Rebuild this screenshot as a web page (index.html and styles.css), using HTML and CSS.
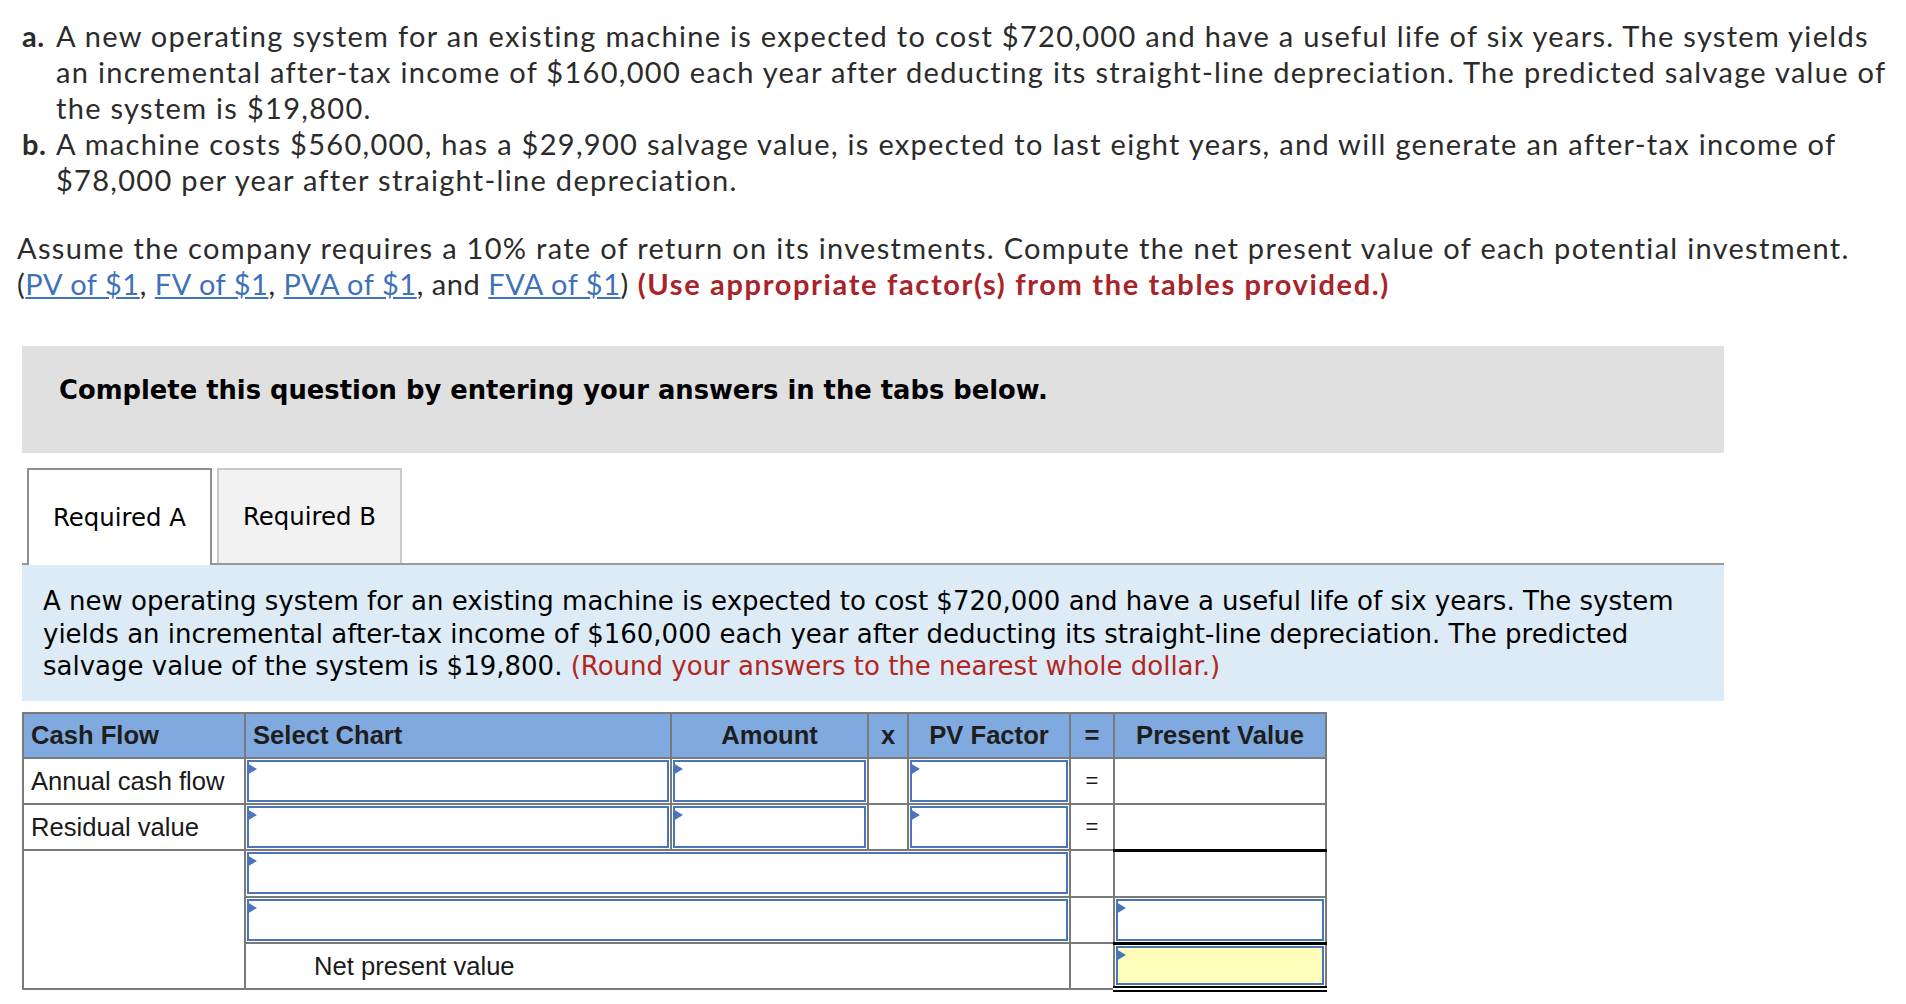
FILE: index.html
```html
<!DOCTYPE html>
<html>
<head>
<meta charset="utf-8">
<link rel="stylesheet" href="styles.css">
</head>
<body>
<div class="page">
  <ul class="parts">
    <li><b class="lbl">a.</b><span>A new operating system for an existing machine is expected to cost $720,000 and have a useful life of six years. The system yields an incremental after-tax income of $160,000 each year after deducting its straight-line depreciation. The predicted salvage value of the system is $19,800.</span></li>
    <li><b class="lbl">b.</b><span>A machine costs $560,000, has a $29,900 salvage value, is expected to last eight years, and will generate an after-tax income of $78,000 per year after straight-line depreciation.</span></li>
  </ul>
  <p class="assume">Assume the company requires a 10% rate of return on its investments. Compute the net present value of each potential investment. <span class="refs">(<a href="#">PV of $1</a>, <a href="#">FV of $1</a>, <a href="#">PVA of $1</a>, and <a href="#">FVA of $1</a>)</span> <b class="warn">(Use appropriate factor(s) from the tables provided.)</b></p>

  <div class="notice">Complete this question by entering your answers in the tabs below.</div>

  <div class="tabs">
    <div class="tab active">Required A</div>
    <div class="tab">Required B</div>
  </div>
  <div class="panel">A new operating system for an existing machine is expected to cost $720,000 and have a useful life of six years. The system yields an incremental after-tax income of $160,000 each year after deducting its straight-line depreciation. The predicted salvage value of the system is $19,800. <span class="round">(Round your answers to the nearest whole dollar.)</span></div>

  <table class="cf">
    <colgroup>
      <col class="c1"><col class="c2"><col class="c3"><col class="c4"><col class="c5"><col class="c6"><col class="c7">
    </colgroup>
    <thead>
      <tr>
        <th class="left">Cash Flow</th>
        <th class="left">Select Chart</th>
        <th>Amount</th>
        <th>x</th>
        <th>PV Factor</th>
        <th>=</th>
        <th>Present Value</th>
      </tr>
    </thead>
    <tbody>
      <tr>
        <td class="label">Annual cash flow</td>
        <td class="in"><div class="box"></div></td>
        <td class="in"><div class="box"></div></td>
        <td></td>
        <td class="in"><div class="box"></div></td>
        <td class="eq">=</td>
        <td></td>
      </tr>
      <tr>
        <td class="label">Residual value</td>
        <td class="in"><div class="box"></div></td>
        <td class="in"><div class="box"></div></td>
        <td></td>
        <td class="in"><div class="box"></div></td>
        <td class="eq">=</td>
        <td class="under"></td>
      </tr>
      <tr>
        <td rowspan="3"></td>
        <td class="in" colspan="4"><div class="box"></div></td>
        <td></td>
        <td></td>
      </tr>
      <tr>
        <td class="in" colspan="4"><div class="box"></div></td>
        <td></td>
        <td class="in under"><div class="box"></div></td>
      </tr>
      <tr>
        <td class="npv" colspan="4">Net present value</td>
        <td></td>
        <td class="in total"><div class="box yellow"></div></td>
      </tr>
    </tbody>
  </table>
</div>
</body>
</html>
```

FILE: styles.css
```css
html, body {
  margin: 0;
  padding: 0;
  background: #fff;
}

.page {
  padding: 18px 0 0 17px;
  font-family: Lato, "Open Sans", sans-serif;
  font-size: 29px;
  line-height: 36px;
  letter-spacing: 1.3px;
  color: #2b2b2b;
}

.parts {
  list-style: none;
  margin: 0;
  padding: 0 0 0 5px;
  width: 1880px;
  box-sizing: border-box;
}

.parts li {
  display: flex;
}

.parts .lbl {
  flex: 0 0 34px;
  font-weight: 700;
  letter-spacing: 0.5px;
}

.assume {
  margin: 32px 0 0 0;
  width: 1863px;
}

.refs {
  letter-spacing: 0.55px;
}

.assume a {
  color: #3f72b8;
  text-decoration: underline;
}

.warn {
  color: #a8232a;
  font-weight: 700;
  letter-spacing: 1.65px;
}

.notice {
  margin: 44px 0 0 5px;
  width: 1702px;
  height: 107px;
  box-sizing: border-box;
  background: #e0e0e0;
  display: flex;
  align-items: center;
  padding: 0 0 19px 37px;
  font-family: "DejaVu Sans", Verdana, sans-serif;
  font-weight: 700;
  font-size: 25.8px;
  letter-spacing: 0;
  color: #000;
}

.tabs {
  margin: 15px 0 0 5px;
  width: 1702px;
  display: flex;
  gap: 5px;
  padding-left: 5px;
  box-sizing: border-box;
  border-bottom: 2px solid #999;
  height: 97px;
  font-family: "DejaVu Sans", Verdana, sans-serif;
  font-size: 24.4px;
  letter-spacing: 0;
  color: #000;
}

.tab {
  width: 185px;
  box-sizing: border-box;
  border: 2px solid #c8c8c8;
  border-bottom: none;
  background: #f2f2f2;
  display: flex;
  align-items: center;
  justify-content: center;
  padding-top: 1px;
}

.tab.active {
  background: #fff;
  border-color: #8f8f8f;
  margin-bottom: -2px;
  position: relative;
}

.panel {
  margin: 0 0 0 5px;
  width: 1702px;
  box-sizing: border-box;
  background: #ddebf7;
  padding: 20px 24px 18px 21px;
  font-family: "DejaVu Sans", Verdana, sans-serif;
  font-size: 26px;
  line-height: 32.5px;
  letter-spacing: 0;
  color: #000;
}

.round {
  color: #b3261e;
}

.cf {
  margin: 11px 0 0 5px;
  border-collapse: collapse;
  table-layout: fixed;
  width: 1303px;
  font-family: "Liberation Sans", Arial, sans-serif;
  font-size: 25.6px;
  letter-spacing: 0;
  color: #1a1a1a;
}

.c1 { width: 222px; }
.c2 { width: 426px; }
.c3 { width: 197px; }
.c4 { width: 40px; }
.c5 { width: 162px; }
.c6 { width: 44px; }
.c7 { width: 212px; }

.cf th, .cf td {
  border: 2px solid #7a7a7a;
  height: 44px;
  padding: 0;
  vertical-align: middle;
}

.cf th {
  height: 43px;
  background: #80aadf;
  font-weight: 700;
  text-align: center;
  color: #1e1e1e;
}

.cf th.left {
  text-align: left;
  padding-left: 7px;
}

.cf td.label {
  padding-left: 7px;
}

.cf td.eq {
  text-align: center;
  font-size: 22px;
}

.cf td.in {
  padding: 1px;
  height: 42px;
}

.cf td.npv {
  padding-left: 68px;
}

.cf td.under {
  border-bottom: 3px solid #000;
}

.cf td.total {
  height: 39px;
  border-bottom: 6px double #000;
}

.box {
  position: relative;
  height: 38px;
  border: 2px solid #4a76b9;
  background: #fff;
}

.box::before {
  content: "";
  position: absolute;
  left: -2px;
  top: 1px;
  width: 0;
  height: 0;
  border-left: 10px solid #4a76b9;
  border-top: 6px solid transparent;
  border-bottom: 6px solid transparent;
}

.box.yellow {
  height: 35px;
  background: #ffffbb;
}
```
